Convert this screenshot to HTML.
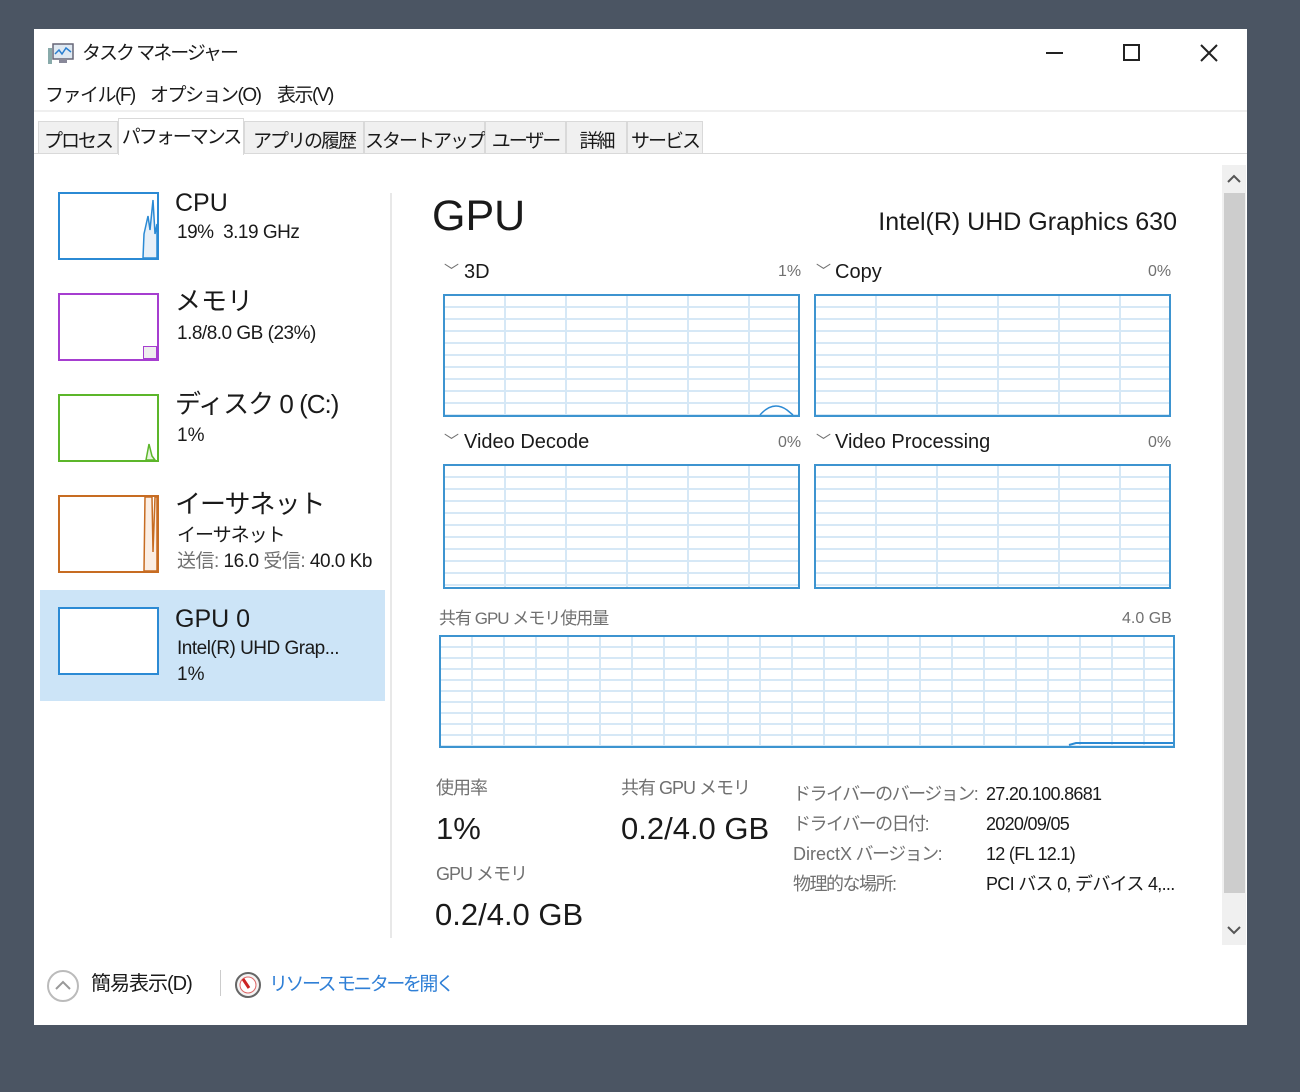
<!DOCTYPE html>
<html><head><meta charset="utf-8"><style>
*{margin:0;padding:0;box-sizing:border-box}
body{width:1300px;height:1092px;background:#4b5563;position:relative;overflow:hidden;font-family:"Liberation Sans","Noto Sans CJK JP",sans-serif;color:#1a1a1a}
.w{position:absolute;left:34px;top:29px;width:1213px;height:996px;background:#fff}
.t{position:absolute;white-space:nowrap;line-height:1}
.g{position:absolute;border:2px solid #3d94d0;background-color:#fff;
background-image:repeating-linear-gradient(to right,transparent 0,transparent 59px,#d6e8f6 59px,#d6e8f6 61px),repeating-linear-gradient(to bottom,transparent 0,transparent 10px,#d6e8f6 10px,#d6e8f6 12px)}
.tab{position:absolute;top:92px;height:33px;background:#f0f0f0;border:1px solid #d9d9d9;font-size:19px;padding-top:4px;text-align:center;letter-spacing:-2px}
.thumb{position:absolute;left:24px;width:101px;height:68px;border:2px solid}
.gray{color:#707070}
</style></head><body>
<div class="w">
<svg style="position:absolute;left:13px;top:13px" width="28" height="24" viewBox="0 0 28 24"><rect x="1" y="6" width="4" height="16" fill="#8aa"/><rect x="6" y="2" width="20" height="15" fill="#dfe9f2" stroke="#667" stroke-width="1.5"/><polyline points="8,12 12,8 15,12 19,6 24,10" fill="none" stroke="#2a7fd0" stroke-width="1.5"/><rect x="12" y="18" width="8" height="3" fill="#889"/></svg>
<div class="t" style="left:48px;top:15px;font-size:19px;letter-spacing:-2px">タスク マネージャー</div>
<div style="position:absolute;left:1012px;top:23px;width:17px;height:2px;background:#222"></div>
<div style="position:absolute;left:1089px;top:15px;width:17px;height:17px;border:2px solid #222"></div>
<svg style="position:absolute;left:1165px;top:14px" width="20" height="20"><path d="M2 2L18 18M18 2L2 18" stroke="#222" stroke-width="2"/></svg>
<div class="t" style="left:11px;top:57px;font-size:19px;letter-spacing:-1.5px">ファイル(F)</div>
<div class="t" style="left:116px;top:57px;font-size:19px;letter-spacing:-1.5px">オプション(O)</div>
<div class="t" style="left:243px;top:57px;font-size:19px;letter-spacing:-1.5px">表示(V)</div>
<div style="position:absolute;left:0;top:81px;width:1213px;height:2px;background:#efefef"></div>
<div style="position:absolute;left:0;top:124px;width:1213px;height:1px;background:#d9d9d9"></div>
<div class="tab" style="left:4px;width:80px">プロセス</div>
<div class="tab" style="left:84px;top:89px;height:37px;width:126px;background:#fff;border-bottom:none;padding-top:3px">パフォーマンス</div>
<div class="tab" style="left:210px;width:120px">アプリの履歴</div>
<div class="tab" style="left:330px;width:121px">スタートアップ</div>
<div class="tab" style="left:451px;width:81px">ユーザー</div>
<div class="tab" style="left:532px;width:61px">詳細</div>
<div class="tab" style="left:593px;width:76px">サービス</div>
<div style="position:absolute;left:356px;top:164px;width:2px;height:745px;background:#e8e8e8"></div>
<div style="position:absolute;left:6px;top:561px;width:345px;height:111px;background:#cce4f7"></div>
<div class="thumb" style="top:163px;border-color:#2b8ad4"><svg width="97" height="64" style="position:absolute;left:0;top:0"><path d="M83 64L84 40L88 22L90 36L93 6L95 40L97 30L97 64Z" fill="#e8f0f8" stroke="#2b8ad4" stroke-width="1.5"/></svg></div>
<div class="t" style="left:141px;top:162px;font-size:25px">CPU</div>
<div class="t" style="left:143px;top:194px;font-size:19px;letter-spacing:-0.5px">19%&nbsp; 3.19 GHz</div>
<div class="thumb" style="top:264px;border-color:#a63ed0"><div style="position:absolute;right:0;bottom:0;width:14px;height:13px;border:1.5px solid #a63ed0;background:#eee"></div></div>
<div class="t" style="left:141px;top:259px;font-size:26px">メモリ</div>
<div class="t" style="left:143px;top:295px;font-size:19px;letter-spacing:-0.5px">1.8/8.0 GB (23%)</div>
<div class="thumb" style="top:365px;border-color:#5cb62a"><svg width="97" height="64" style="position:absolute;left:0;top:0"><path d="M86 64L89 48L92 60L95 64Z" fill="#e8f3df" stroke="#5cb62a" stroke-width="1.5"/></svg></div>
<div class="t" style="left:141px;top:362px;font-size:26px;letter-spacing:-1px">ディスク 0 (C:)</div>
<div class="t" style="left:143px;top:397px;font-size:19px">1%</div>
<div class="thumb" style="top:466px;border-color:#c76c22;height:78px"><svg width="97" height="74" style="position:absolute;left:0;top:0"><path d="M84 74L85 0L92 0L93 55L95 0L97 0L97 74Z" fill="#fbeee4" stroke="#c76c22" stroke-width="1.5"/></svg></div>
<div class="t" style="left:141px;top:462px;font-size:26px;letter-spacing:-1px">イーサネット</div>
<div class="t" style="left:143px;top:497px;font-size:19px;letter-spacing:-1px">イーサネット</div>
<div class="t" style="left:143px;top:523px;font-size:19px;letter-spacing:-0.5px"><span class="gray">送信:</span> 16.0 <span class="gray">受信:</span> 40.0 Kb</div>
<div class="thumb" style="top:578px;border-color:#2b8ad4;background:#fff"></div>
<div class="t" style="left:141px;top:578px;font-size:25px">GPU 0</div>
<div class="t" style="left:143px;top:610px;font-size:19px;letter-spacing:-0.5px">Intel(R) UHD Grap...</div>
<div class="t" style="left:143px;top:636px;font-size:19px">1%</div>
<div class="t" style="left:398px;top:166px;font-size:43px">GPU</div>
<div class="t" style="right:70px;top:181px;font-size:25px">Intel(R) UHD Graphics 630</div>
<div class="t gray" style="left:410px;top:235px;font-size:15px">﹀</div>
<div class="t" style="left:430px;top:233px;font-size:20px">3D</div>
<div class="t gray" style="left:744px;top:235px;font-size:16px">1%</div>
<div class="t gray" style="left:782px;top:235px;font-size:15px">﹀</div>
<div class="t" style="left:801px;top:233px;font-size:20px">Copy</div>
<div class="t gray" style="left:1114px;top:235px;font-size:16px">0%</div>
<div class="g" style="left:409px;top:265px;width:357px;height:123px"><svg width="353" height="119" style="position:absolute;left:0;top:0"><path d="M315 119Q328 104 342 114L348 119" fill="none" stroke="#2b8ad4" stroke-width="1.5"/></svg></div>
<div class="g" style="left:780px;top:265px;width:357px;height:123px"></div>
<div class="t gray" style="left:410px;top:405px;font-size:15px">﹀</div>
<div class="t" style="left:430px;top:403px;font-size:20px">Video Decode</div>
<div class="t gray" style="left:744px;top:406px;font-size:16px">0%</div>
<div class="t gray" style="left:782px;top:405px;font-size:15px">﹀</div>
<div class="t" style="left:801px;top:403px;font-size:20px">Video Processing</div>
<div class="t gray" style="left:1114px;top:406px;font-size:16px">0%</div>
<div class="g" style="left:409px;top:435px;width:357px;height:125px"></div>
<div class="g" style="left:780px;top:435px;width:357px;height:125px"></div>
<div class="t gray" style="left:405px;top:581px;font-size:17px;letter-spacing:-1px">共有 GPU メモリ使用量</div>
<div class="t gray" style="left:1088px;top:582px;font-size:16px">4.0 GB</div>
<div class="g" style="left:405px;top:606px;width:736px;height:113px;background-image:repeating-linear-gradient(to right,transparent 0,transparent 30px,#d6e8f6 30px,#d6e8f6 32px),repeating-linear-gradient(to bottom,transparent 0,transparent 9px,#d6e8f6 9px,#d6e8f6 11px)"><svg width="732" height="109" style="position:absolute;left:0;top:0"><path d="M628 108L635 106L732 106" fill="none" stroke="#2b8ad4" stroke-width="2"/></svg></div>
<div class="t gray" style="left:402px;top:750px;font-size:18px;letter-spacing:-1px">使用率</div>
<div class="t" style="left:402px;top:784px;font-size:31px">1%</div>
<div class="t gray" style="left:402px;top:836px;font-size:18px;letter-spacing:-1px">GPU メモリ</div>
<div class="t" style="left:401px;top:870px;font-size:31px">0.2/4.0 GB</div>
<div class="t gray" style="left:587px;top:750px;font-size:18px;letter-spacing:-1px">共有 GPU メモリ</div>
<div class="t" style="left:587px;top:784px;font-size:31px">0.2/4.0 GB</div>
<div class="t gray" style="left:759px;top:750px;font-size:18px;letter-spacing:-1.5px;line-height:30px">ドライバーのバージョン:<br>ドライバーの日付:<br><span style="letter-spacing:0">DirectX</span> バージョン:<br>物理的な場所:</div>
<div class="t" style="left:952px;top:750px;font-size:18px;letter-spacing:-0.7px;line-height:30px">27.20.100.8681<br>2020/09/05<br>12 (FL 12.1)<br>PCI バス 0, デバイス 4,...</div>
<div style="position:absolute;left:1188px;top:136px;width:24px;height:780px;background:#f0f0f0"></div>
<div style="position:absolute;left:1190px;top:164px;width:21px;height:700px;background:#cdcdcd"></div>
<svg style="position:absolute;left:1192px;top:144px" width="16" height="12"><path d="M2 9L8 3L14 9" fill="none" stroke="#555" stroke-width="2"/></svg>
<svg style="position:absolute;left:1192px;top:895px" width="16" height="12"><path d="M2 3L8 9L14 3" fill="none" stroke="#555" stroke-width="2"/></svg>
<svg style="position:absolute;left:12px;top:940px" width="34" height="34"><circle cx="17" cy="17" r="15" fill="none" stroke="#bbb" stroke-width="2"/><path d="M10 20L17 13L24 20" fill="none" stroke="#999" stroke-width="2"/></svg>
<div class="t" style="left:57px;top:945px;font-size:20px;letter-spacing:-1px">簡易表示(D)</div>
<div style="position:absolute;left:186px;top:941px;width:1px;height:26px;background:#ccc"></div>
<svg style="position:absolute;left:200px;top:942px" width="28" height="28"><circle cx="14" cy="14" r="12" fill="#f4f4f4" stroke="#666" stroke-width="2"/><circle cx="14" cy="14" r="8" fill="#fff" stroke="#d66" stroke-width="1"/><path d="M9 8L15 17" stroke="#c22" stroke-width="3"/></svg>
<div class="t" style="left:235px;top:946px;font-size:19px;letter-spacing:-2.5px;color:#2f7fd6">リソース モニターを開く</div>
</div>
</body></html>
